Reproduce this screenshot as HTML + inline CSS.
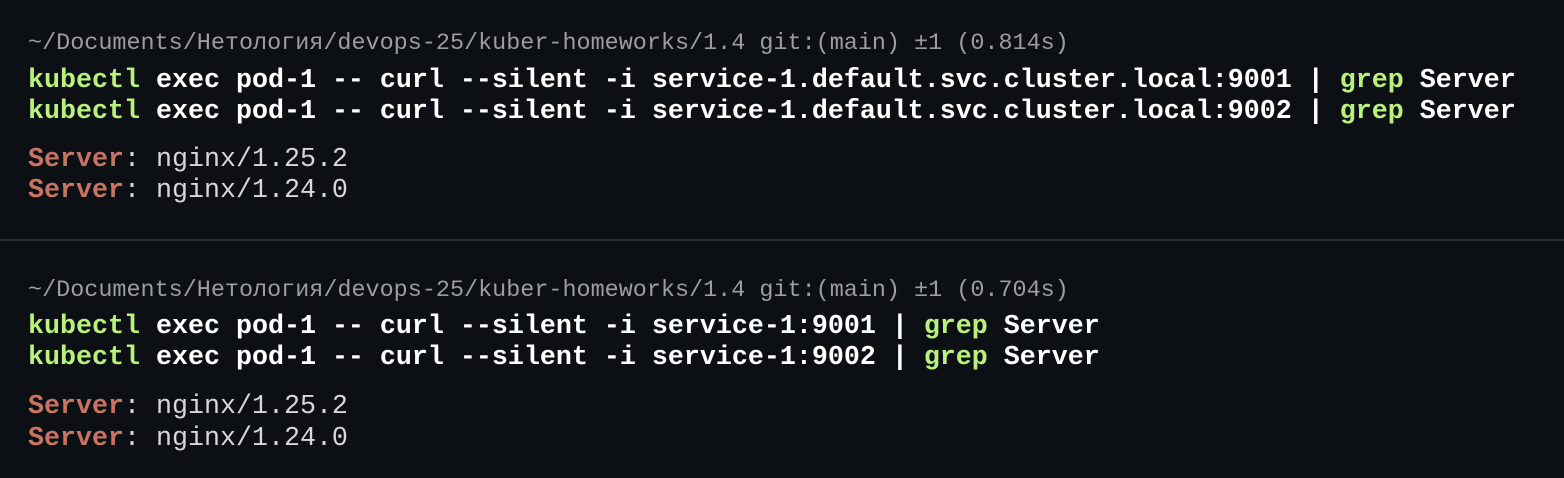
<!DOCTYPE html><html><head><meta charset="utf-8"><style>
body{margin:0;width:1564px;height:478px;background:#0c0f13;overflow:hidden;font-family:"Liberation Mono","DejaVu Sans Mono",monospace;}
.l{position:absolute;left:28px;white-space:pre;line-height:31px;height:31px}
.p{font-size:23.45px;color:#9b9da0}
.c{font-size:26.67px;font-weight:bold;color:#fff}
.g{color:#b8f27c}
.o{font-size:26.67px;color:#d7d7d7}
.s{color:#c97362;font-weight:bold}
.hr{position:absolute;left:0;top:239px;width:1564px;height:2px;background:#2a2d31}
</style></head><body>
<div class="l p" style="top:28px">~/Documents/Нетология/devops-25/kuber-homeworks/1.4 git:(main) ±1 (0.814s)</div>
<div class="l c" style="top:66px"><span class="g">kubectl</span> exec pod-1 -- curl --silent -i service-1.default.svc.cluster.local:9001 | <span class="g">grep</span> Server</div>
<div class="l c" style="top:97px"><span class="g">kubectl</span> exec pod-1 -- curl --silent -i service-1.default.svc.cluster.local:9002 | <span class="g">grep</span> Server</div>
<div class="l o" style="top:145px"><span class="s">Server</span>: nginx/1.25.2</div>
<div class="l o" style="top:176px"><span class="s">Server</span>: nginx/1.24.0</div>
<div class="hr"></div>
<div class="l p" style="top:275px">~/Documents/Нетология/devops-25/kuber-homeworks/1.4 git:(main) ±1 (0.704s)</div>
<div class="l c" style="top:312px"><span class="g">kubectl</span> exec pod-1 -- curl --silent -i service-1:9001 | <span class="g">grep</span> Server</div>
<div class="l c" style="top:343px"><span class="g">kubectl</span> exec pod-1 -- curl --silent -i service-1:9002 | <span class="g">grep</span> Server</div>
<div class="l o" style="top:392px"><span class="s">Server</span>: nginx/1.25.2</div>
<div class="l o" style="top:424px"><span class="s">Server</span>: nginx/1.24.0</div>
</body></html>
